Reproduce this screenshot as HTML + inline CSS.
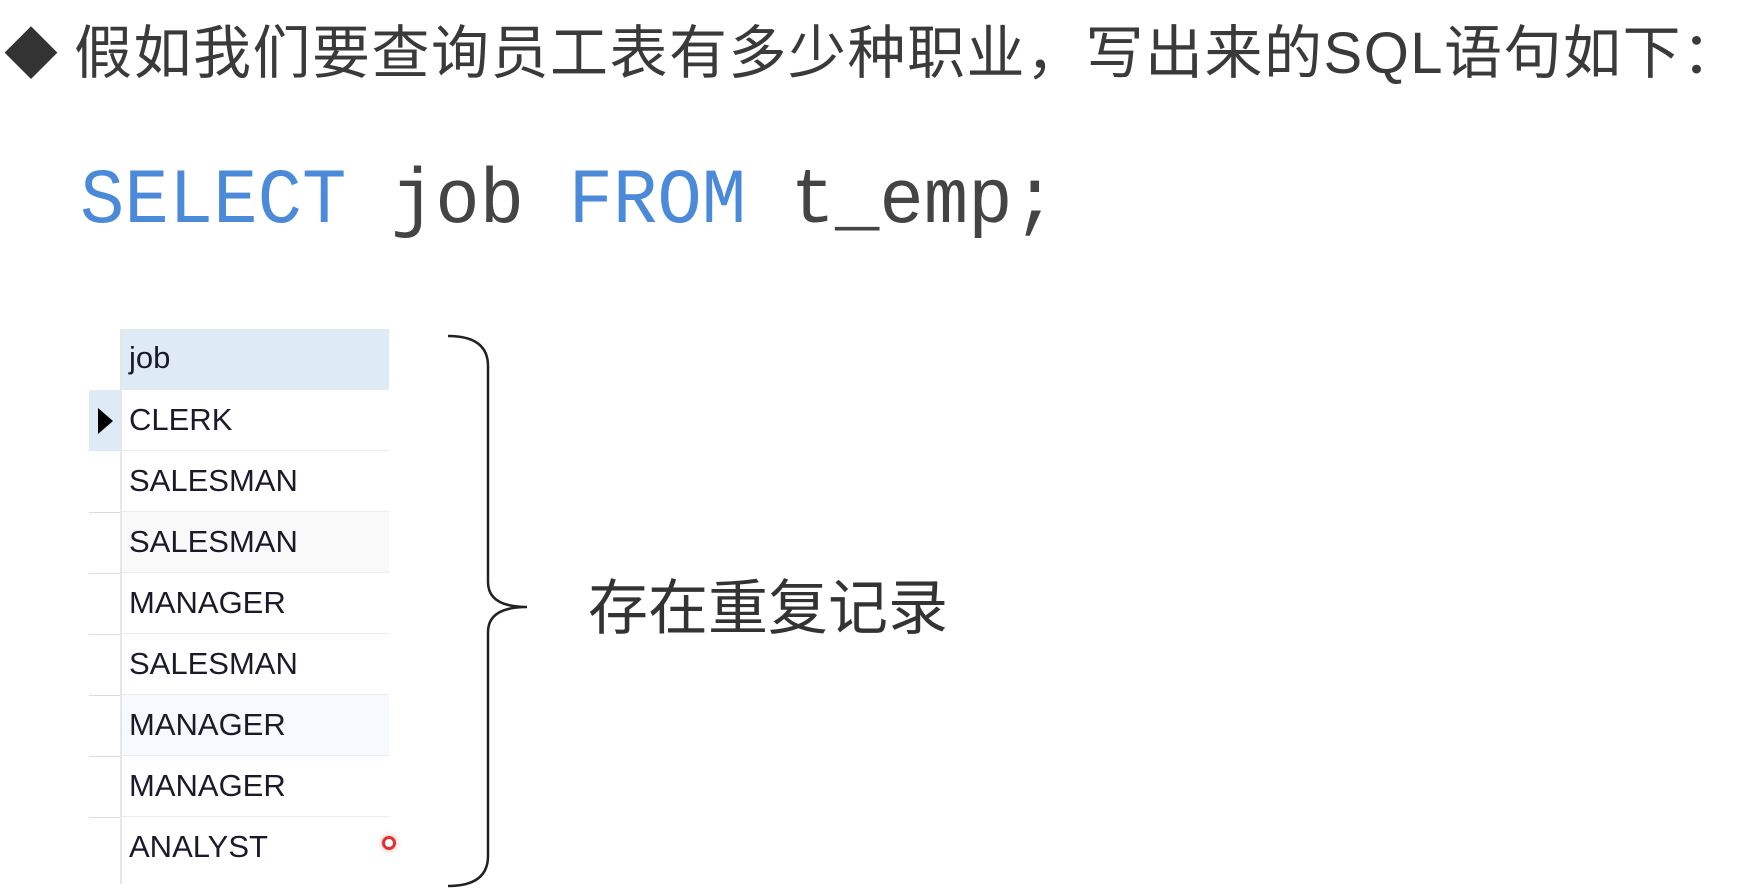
<!DOCTYPE html>
<html><head><meta charset="utf-8"><style>
body{margin:0;width:1740px;height:888px;background:#fff;position:relative;overflow:hidden;font-family:"Liberation Sans","Noto Sans CJK SC",sans-serif}
.t{position:absolute;white-space:nowrap}
.row{position:absolute;left:120px;width:269px;height:60px;border-bottom:1px solid #ececec;border-left:2px solid #e6e6e6;font-size:31px;color:#1a1a2a;line-height:60px;padding-left:7px;box-sizing:border-box}
.ind{position:absolute;left:89px;width:31px;height:1px;background:#dcdcdc}
</style></head><body>
<div class="t" style="left:4px;top:10px;font-size:54px;color:#333">◆</div>
<div class="t" style="left:74px;top:6px;font-size:58px;letter-spacing:1.5px;color:#3a3a3a">假如我们要查询员工表有多少种职业，写出来的SQL语句如下：</div>
<div class="t" style="left:80px;top:158px;font-family:'Liberation Mono',monospace;font-size:74px;color:#444;transform:scaleY(1.05);transform-origin:top left"><span style="color:#4a8ad8">SELECT</span> job <span style="color:#4a8ad8">FROM</span> t_emp;</div>

<div class="row" style="top:329px;background:#dfeaf7;height:61px;line-height:58px;border-bottom:none">job</div>
<div style="position:absolute;left:89px;top:390px;width:31px;height:61px;background:#dfeaf7"></div>
<div style="position:absolute;left:98px;top:408px;width:0;height:0;border-top:13px solid transparent;border-bottom:13px solid transparent;border-left:15px solid #000"></div>
<div class="row" style="top:390px;height:61px">CLERK</div>
<div class="row" style="top:451px;height:61px">SALESMAN</div>
<div class="row" style="top:512px;height:61px;background:#f9f9f9">SALESMAN</div>
<div class="row" style="top:573px;height:61px">MANAGER</div>
<div class="row" style="top:634px;height:61px">SALESMAN</div>
<div class="row" style="top:695px;height:61px;background:#f6f9fe">MANAGER</div>
<div class="row" style="top:756px;height:61px">MANAGER</div>
<div class="row" style="top:817px;height:67px;border-bottom:none">ANALYST</div>
<div class="ind" style="top:512px"></div><div class="ind" style="top:573px"></div><div class="ind" style="top:634px"></div><div class="ind" style="top:695px"></div><div class="ind" style="top:756px"></div><div class="ind" style="top:817px"></div>
<div style="position:absolute;left:382px;top:836px;width:8px;height:8px;border:3px solid #e03030;border-radius:50%;box-shadow:0 0 6px #f4a0a0;box-sizing:content-box"></div>

<svg style="position:absolute;left:0;top:0" width="1740" height="888"><path d="M448 336 Q488 336 488 366 L488 582 Q488 607 527 607 Q488 607 488 632 L488 856 Q488 886 448 886" fill="none" stroke="#222" stroke-width="2.5"/></svg>
<div class="t" style="left:588px;top:560px;font-size:60px;color:#333">存在重复记录</div>
</body></html>
